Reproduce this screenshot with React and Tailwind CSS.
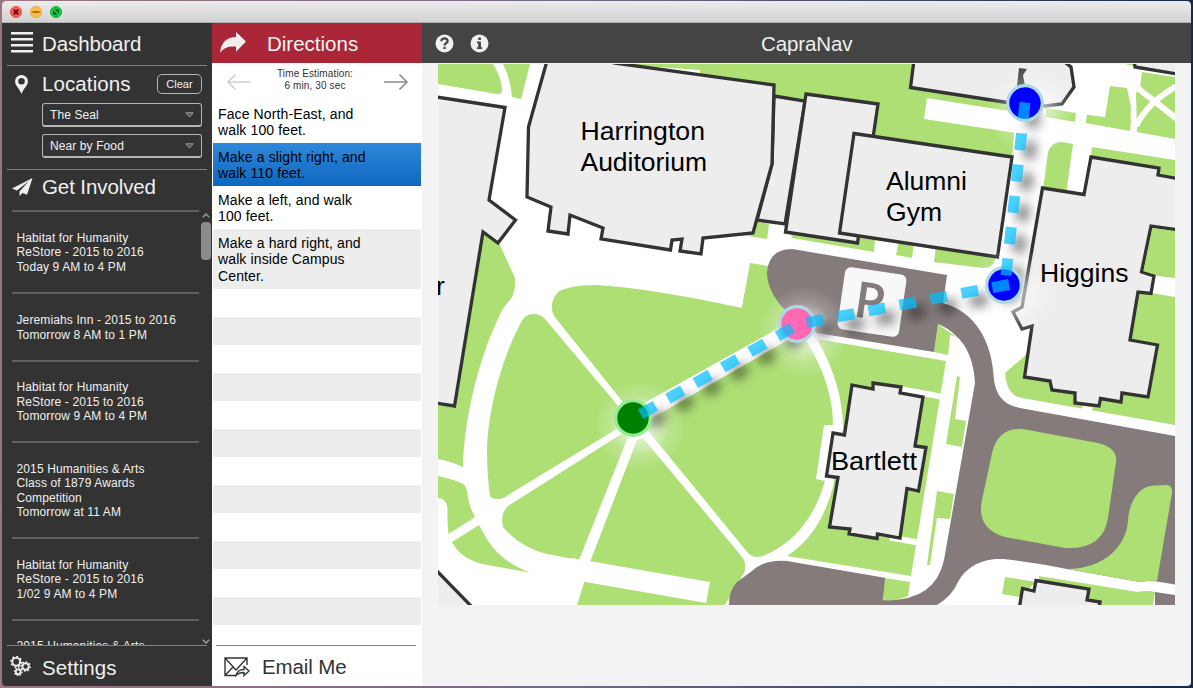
import React from "react";

const EVENTS = [
  { h: "h-[82px]", lines: ["Habitat for Humanity", "ReStore - 2015 to 2016", "Today 9 AM to 4 PM"] },
  { h: "h-[68px]", lines: ["Jeremiahs Inn - 2015 to 2016", "Tomorrow 8 AM to 1 PM"] },
  { h: "h-[81px]", lines: ["Habitat for Humanity", "ReStore - 2015 to 2016", "Tomorrow 9 AM to 4 PM"] },
  { h: "h-[96px]", lines: ["2015 Humanities & Arts", "Class of 1879 Awards", "Competition", "Tomorrow at 11 AM"] },
  { h: "h-[82px]", lines: ["Habitat for Humanity", "ReStore - 2015 to 2016", "1/02 9 AM to 4 PM"] },
  { h: "h-[52px]", lines: ["2015 Humanities & Arts"] },
];

const STEPS = [
  { cls: "h-[43px] bg-white", lines: ["Face North-East, and", "walk 100 feet."] },
  { cls: "h-[43px] bg-gradient-to-b from-[#2e87d9] to-[#0e68c0]", lines: ["Make a slight right, and", "walk 110 feet."] },
  { cls: "h-[43px] bg-white", lines: ["Make a left, and walk", "100 feet."] },
  { cls: "h-[60px] bg-[#ededed]", lines: ["Make a hard right, and", "walk inside Campus", "Center."] },
];

function TitleBar() {
  return (
    <div className="flex h-[22px] shrink-0 items-center gap-[8px] rounded-t-[4px] border-b border-[#b0b0b0] bg-gradient-to-b from-[#ececec] to-[#d2d2d2] pl-[8px]">
      <svg width="12" height="12" viewBox="0 0 12 12">
        <circle cx="6" cy="6" r="5.6" fill="#fc5753" stroke="#df4744" strokeWidth=".8" />
        <path d="M3.7 3.7l4.6 4.6M8.3 3.7L3.7 8.3" stroke="#6b0507" strokeWidth="1.9" />
      </svg>
      <svg width="12" height="12" viewBox="0 0 12 12">
        <circle cx="6" cy="6" r="5.6" fill="#fdbc40" stroke="#de9f34" strokeWidth=".8" />
        <path d="M2.4 6h7.2" stroke="#985712" strokeWidth="1.6" />
      </svg>
      <svg width="12" height="12" viewBox="0 0 12 12">
        <circle cx="6" cy="6" r="5.6" fill="#0fc94e" stroke="#12ac28" strokeWidth=".8" />
        <path d="M4.6 3.2h4.2v4.2zM3.2 4.6v4.2h4.2z" fill="#045d0e" />
      </svg>
    </div>
  );
}

function Select({ label }) {
  return (
    <div className="flex h-[24px] w-[160px] items-center justify-between rounded-[3px] border border-b-2 border-[#b5b5b5] pr-[7px] pl-[7px] text-[12px] leading-none text-[#f2f2f2]">
      <span className="tracking-[0.1px]">{label}</span>
      <svg width="9" height="6" viewBox="0 0 9 6">
        <path d="M.8.8h7.4L4.5 5z" fill="#555" stroke="#a5a5a5" strokeWidth=".9" />
      </svg>
    </div>
  );
}

function Gear({ cx, cy, r }) {
  return (
    <g fill="none" stroke="#f0f0f0">
      <circle cx={cx} cy={cy} r={r} strokeWidth="1.9" />
      <circle cx={cx} cy={cy} r={r + 1.4} strokeWidth="1.4" pathLength="16" strokeDasharray="1 1" />
    </g>
  );
}

function Sidebar() {
  return (
    <aside className="flex w-[210px] shrink-0 flex-col bg-[#333333] text-[#f0f0f0]">
      <div className="mx-[5px] flex h-[43px] shrink-0 items-center border-b border-[#828282] pl-[4px]">
        <svg width="22" height="21" viewBox="0 0 22 21" className="-mt-[4px]">
          <path d="M0 1.3h22M0 7.2h22M0 13.2h22M0 19.3h22" stroke="#f0f0f0" strokeWidth="2.4" />
        </svg>
        <span className="ml-[9px] text-[20.5px] leading-[42px] tracking-[-0.1px]">Dashboard</span>
      </div>
      <div className="mx-[5px] flex h-[104px] shrink-0 flex-col border-b border-[#828282]">
        <div className="flex h-[36px] items-center pr-[5px] pl-[8px]">
          <svg width="13" height="19" viewBox="0 0 13 19">
            <path fillRule="evenodd" d="M6.5 0A6.4 6.4 0 0 0 .1 6.4C.1 10.6 4.4 13 6.5 19 8.6 13 12.9 10.6 12.9 6.4A6.4 6.4 0 0 0 6.5 0zM6.5 3a3.3 3.3 0 1 1 0 6.6 3.3 3.3 0 0 1 0-6.600z" fill="#f0f0f0" />
          </svg>
          <span className="ml-[14px] text-[20.5px] leading-none tracking-[0.1px]">Locations</span>
          <span className="ml-auto flex h-[20px] w-[45px] items-center justify-center rounded-[5px] border border-[#b5b5b5] text-[11px]">Clear</span>
        </div>
        <div className="mt-[1px] ml-[35px] flex flex-col gap-[7px]">
          <Select label="The Seal" />
          <Select label="Near by Food" />
        </div>
      </div>
      <div className="flex h-[40px] shrink-0 items-center pl-[10px]">
        <svg width="21" height="18" viewBox="0 0 21 18" className="-mt-[6px]">
          <path d="M20.5 0L0 10.5 5 12.5 17 3 7.5 13.5V18l3-3 4.5 1.8z" fill="#f0f0f0" />
        </svg>
        <span className="-mt-[5px] ml-[9px] text-[20.5px] leading-none tracking-[-0.1px]">Get Involved</span>
      </div>
      <div className="flex min-h-0 flex-1">
        <div className="ml-[10px] w-[187px] overflow-hidden">
          {EVENTS.map((e, i) => (
            <div key={i} className={`flex flex-col justify-center border-t-2 border-[#5f5f5f] pt-[1px] pl-[4.5px] text-[12px] leading-[14.4px] tracking-[0.12px] whitespace-nowrap ${e.h}`}>
              {e.lines.map((l) => <div key={l}>{l}</div>)}
            </div>
          ))}
        </div>
        <div className="ml-[1px] flex flex-1 flex-col items-center">
          <svg width="8" height="5" viewBox="0 0 8 5" className="mt-[3px]"><path d="M.8 4.2L4 1l3.2 3.2" stroke="#999" strokeWidth="1.5" fill="none" /></svg>
          <div className="mt-[4px] h-[38px] w-[10px] rounded-[4px] bg-[#8b8b8b]" />
          <svg width="8" height="5" viewBox="0 0 8 5" className="mt-auto mb-[1px]"><path d="M.8.8L4 4 7.2.8" stroke="#999" strokeWidth="1.5" fill="none" /></svg>
        </div>
      </div>
      <div className="mx-[5px] flex h-[41px] shrink-0 items-center border-t border-[#828282] pl-[3px]">
        <svg width="21" height="20" viewBox="0 0 21 20">
          <Gear cx={6.2} cy={5.8} r={3.9} />
          <Gear cx={15.6} cy={10.5} r={3.2} />
          <Gear cx={8.2} cy={15.8} r={2.4} />
        </svg>
        <span className="mt-[5px] ml-[11px] text-[20.5px] leading-none tracking-[0.05px]">Settings</span>
      </div>
    </aside>
  );
}

function Directions() {
  return (
    <section className="flex w-[210px] shrink-0 flex-col bg-white">
      <div className="flex h-[40px] shrink-0 items-center bg-[#ab2738] pl-[8px] text-[#f3f3f3]">
        <svg width="26" height="21" viewBox="0 0 26 21" className="-mt-[1px]">
          <path d="M0 20.8C1 10.5 7 5.2 16 5V0l10 9.6-10 10.2V14.6C9 14 4 15.5 0 20.8z" fill="#f3eeee" />
        </svg>
        <span className="mt-[2px] ml-[21px] text-[20.5px] leading-none">Directions</span>
      </div>
      <div className="flex h-[37px] shrink-0 justify-between pr-[13px] pl-[14px]">
        <svg width="26" height="18" viewBox="0 0 26 18" className="mt-[10px]"><path d="M25 9H2M9.5 1.5L2 9l7.5 7.5" stroke="#cfcfcf" strokeWidth="1.6" fill="none" /></svg>
        <div className="mt-[5px] -ml-[5px] text-center text-[10px] leading-[12px] tracking-[0.12px] text-[#333]">
          <div>Time Estimation:</div>
          <div>6 min, 30 sec</div>
        </div>
        <svg width="26" height="18" viewBox="0 0 26 18" className="mt-[10px]"><path d="M1 9h23M16.5 1.5L24 9l-7.5 7.5" stroke="#8a8a8a" strokeWidth="1.6" fill="none" /></svg>
      </div>
      <div className="mx-[1px] flex min-h-0 flex-1 flex-col">
        {STEPS.map((s, i) => (
          <div key={i} className={`flex shrink-0 flex-col justify-center pt-[1px] pl-[5px] text-[14px] leading-[16.2px] tracking-[0.12px] text-black ${s.cls}`}>
            {s.lines.map((l) => <div key={l}>{l}</div>)}
          </div>
        ))}
        {Array.from({ length: 12 }, (_, i) => (
          <div key={i} className={i % 2 ? "h-[28px] shrink-0 bg-[#ededed]" : "h-[28px] shrink-0 bg-white"} />
        ))}
      </div>
      <div className="mr-[6px] ml-[4px] flex h-[41px] shrink-0 items-center border-t border-[#828282] pl-[8px] text-[#333]">
        <svg width="26" height="20" viewBox="0 0 26 20" fill="none" stroke="#333" strokeWidth="1.4" className="mt-[2px]">
          <path d="M12 18.500H1V1h22v7M1 1l11 12L23 1M1 18.500l8-8.500" />
          <path d="M12 18.500c1-4.500 4-6 8-6V9.500l5 4.500-5 4.500v-3c-3 0-5.500.5-8 3z" />
        </svg>
        <span className="mt-[3px] ml-[12px] text-[20.5px] leading-none tracking-[-0.1px]">Email Me</span>
      </div>
    </section>
  );
}

const ROUTE = [
  "M640.6 414.2L792.9 327.5",
  "M806.6 322.6L1009.5 284.4",
  "M1006 275.4L1025 102.5",
];

const STOPS = [
  { x: 633, y: 418, fill: "#008000", ring: "#90ee90" },
  { x: 797, y: 324, fill: "#ff69b4", ring: "#add8e6" },
  { x: 1004, y: 285, fill: "#0000ff", ring: "#add8e6" },
  { x: 1025, y: 103, fill: "#0000ff", ring: "#add8e6" },
];

const LABELS = [
  { x: 580.5, y: 140, w: 124.5, text: "Harrington" },
  { x: 580.5, y: 171, w: 126.5, text: "Auditorium" },
  { x: 886, y: 190, w: 81, text: "Alumni" },
  { x: 886, y: 221, w: 56, text: "Gym" },
  { x: 1040, y: 282, w: 88.5, text: "Higgins" },
  { x: 831, y: 469.5, w: 86, text: "Bartlett" },
];

function CampusMap() {
  return (
    <svg width="737" height="541" viewBox="438 64 737 541" className="block">
      <defs>
        <radialGradient id="glow">
          <stop offset="0" stopColor="#fff" stopOpacity=".75" />
          <stop offset=".35" stopColor="#fff" stopOpacity=".55" />
          <stop offset=".65" stopColor="#fff" stopOpacity=".2" />
          <stop offset="1" stopColor="#fff" stopOpacity="0" />
        </radialGradient>
        <filter id="shadow" filterUnits="userSpaceOnUse" x="438" y="64" width="737" height="541">
          <feGaussianBlur stdDeviation="5.5" />
        </filter>
      </defs>
      <rect x="438" y="64" width="737" height="541" fill="#fff" />

      {/* lawns */}
      <g fill="#addf75">
        <path d="M438 64H493Q501 76 502 89Q502 95 497 94L438 84Z" />
        <path d="M503 64Q511 80 512 97L521 99L530 64Z" />
        <path d="M480 228L499 243L515 278Q516 290 511 299Q502 308 497 321C480 358 464 415 463 467Q450 461 438 459V400Z" />
        <path d="M438 476Q453 479 463 484Q466 486 467 491Q468 505 475 517L448.500 534Q447 522 447.500 508Q446 498 438 498Z" />
        <path d="M452 542L479 525L488 541Q502 562 530 572.500L487 565Q461 560 452 542Z" />
        <path d="M534 314Q527 314 523 319C505 350 488 405 487 450Q487 475 490 496Q491 499 499 499Q505 498 508 495L620 427L630 420L545 319Q540 314 534 314Z" />
        <path d="M595 285Q570 285 558 292Q548 304 554 316L630 411L795 319L775 267L750 263L742 308Q650 288 595 285Z" />
        <path d="M640 425L800 333L807 342Q833 385 833 425L824 425L816 479L825 481C815 515 797 542 763 556Q754 559 748 553L645 427Z" />
        <path d="M643 438L743 558Q747 565 744 573L725 605H577L584 583L590 562L637 440Z" />
        <path d="M628 437L579 560L547 554Q520 547 503 527Q500 514 508 506L623 433Z" />
        <path d="M817 339L946 361L911 576L787 556Q820 535 833 487L843 428Q843 385 817 339Z" />
        <path d="M938 324L956 337L950 335L948 355L934 352Z" />
        <path d="M957 376L960 377L955 419L966 421L962 447L946 444Z" />
        <path d="M937 491L954 494L950 519L937 518L930 565H927Z" />
        <path d="M615 64H1000L1020 110L1014 134L1012 160L700 240V70Z" />
        <path d="M1087 115L1105 118L1110 86L1127 88L1131 107L1130 131L1086 123Z" />
        <path d="M1142 72L1175 77V139L1137 132L1136 93L1140 88Z" />
        <path d="M1125 64H1134V66Z" />
        <path d="M1092 147L1175 160V185L1090 165Z" />
        <path d="M1043 190L1048 152Q1052 141 1062 142L1073 144L1066 195Z" />
        <path d="M1145 225H1175V278L1150 275L1138 272Z" />
        <path d="M1120 290L1152 293L1175 297V425L1022 398Q1007 396 1005 373L1035 347Z" />
      </g>
      <path d="M746 200L795 200L860 215H1010L1000 290H746Z" fill="#fff" />
      <g fill="#addf75">
        <path d="M750 263L742 308L790 320L775 267Z" />
        <path d="M750 220L769 224L767 239L748 236Z" />
        <path d="M790 230L875 240L874 252L792 238Z" />
        <path d="M899 240L914 243L912 258L896 255Z" />
        <path d="M936 245L996 255Q994 269 983 268L934 262Z" />
      </g>

      {/* footpaths */}
      <path d="M927 98L1046 117L1135 131L1130 150L924 119Z" fill="#fff" />
      <path d="M1046 108L1076 113L1075 122L1046 117ZM1087 115L1131 120L1130 131L1086 123Z" fill="#addf75" />
      <g fill="none" stroke="#fff">
        <path d="M570 568.500L708 592.500" strokeWidth="21.500" />
        <path d="M1135 86L1177 119M1136 126Q1148 102 1177 86" strokeWidth="6" />
        <path d="M895 388L943 397M890 537.500L918 542.500" strokeWidth="6" />
        <path d="M633 418L798 325" strokeWidth="11" />
        <path d="M1082 408L1092 410" strokeWidth="5" />
      </g>

      {/* roads */}
      <path d="M792 249L947 275L943 303C975 312 992 340 994 380Q997 404 1020 408L1175 436V605H729Q729 590 737 582L752 571Q765 559 787 561L886 578L883 600Q935 602 944 560L975 383Q973 350 955 335Q948 328 938 324L934 352L817 333L783 308Q767 290 767 272Q769 249 792 249Z" fill="#857b7b" />
      <path d="M937 605Q952 596 958 582C967 565 985 558 1003 559Q1030 562 1067 569L1140 582Q1150 580 1160 582L1175 584.500V595L1155 592V605Z" fill="#fff" />
      <g fill="#addf75">
        <path d="M885 578L910 582L908 596Q893 602 883 600Z" />
        <path d="M1023 429L1098 443Q1118 448 1116 462L1108 518Q1103 550 1065 548L1005 537Q976 529 982 500L992 453Q998 427 1023 429Z" />
        <path d="M1067 569C1105 569 1127 545 1128 520C1130 497 1142 485 1155 485.500L1168 485Q1173 487 1172 493L1157 581Q1148 580 1140 582Z" />
        <path d="M1039 576L1138 592Q1147 590 1155 592L1153 605H1039Z" />
        <path d="M1005 577L1036 582L1020 597L1002 594Z" />
      </g>

      {/* buildings */}
      <g fill="#ededed" stroke="#333" strokeWidth="3.3">
        <path d="M430 96L505 107.500L489 200L515.500 220L498 243L483 232L454.500 406L430 402Z" />
        <path d="M774 96L805 101L785 224L757 220L772 164Z" />
        <path d="M550 50L528.500 127L527 197L551 207L548 231L568 234L570 215L603 228L601 239L670.500 250L672 240L682 239L680 251L701 254L703 238L753 233L772 164L774 85L615 63Z" />
        <path d="M806 94L878 104L857.500 243L785.500 232Z" />
        <path d="M854 133.500L1012 157L997.500 257L839.500 233Z" />
        <path d="M914 60L910.500 87.500L1017 104L1045 106L1062 104L1074 87L1071 67L1062 60Z" />
        <path d="M1134 60L1135 67L1180 74.500V60Z" />
        <path d="M1042.500 188L1084 194.500L1091 157L1159 168L1158 175L1180 179V230L1151 226L1141.500 272L1154 276L1151 293.500L1138 292L1130 340L1157.500 345L1148 397L1122 393L1121 402L1100.500 398.500L1099 406L1075 403V393L1052 390L1050 381L1024.500 377L1032 326L1022 329L1013 312L1022 307Z" />
        <path d="M852 385L873 389V383L901 387L900 393L923 397L915 446L926 447.500L918.500 491L907 488.500L900 538L877.500 534L877 538.500L849 534L850 529L829.500 527L838 477.500L826.500 476L833 433L844.500 435Z" />
        <path d="M1019 610L1022.500 588.500L1034 591L1036 580.500L1089 589L1087 600L1100 602L1099 610Z" />
        <path d="M430 564L476 611H430Z" />
      </g>
      {/* green notch east of Higgins */}
      <path d="M1152.500 228L1176 231.500V278L1156 275L1143.500 271Z" fill="#addf75" />
      <path d="M1019 68L1027 69L1023 75L1025 86H1017Z" fill="#444" />

      {/* parking sign */}
      <g transform="translate(872 302) rotate(8.2)">
        <rect x="-31" y="-31.5" width="62" height="63" rx="6" fill="#f8f8f8" />
        <text x="-17.5" y="17" fontSize="50" fontWeight="600" fontFamily="Open Sans, sans-serif" fill="#857b7b">P</text>
      </g>

      {STOPS.map((s, i) => <circle key={i} cx={s.x + 7} cy={s.y + 8} r="46" fill="url(#glow)" />)}
      <g filter="url(#shadow)" fill="none" stroke="#000" strokeOpacity=".5" strokeWidth="12" strokeDasharray="17 14.5" transform="translate(9 8.5)">
        {ROUTE.map((d) => <path key={d} d={d} />)}
      </g>
      {STOPS.map((s, i) => <circle key={i} cx={s.x} cy={s.y} r="17.3" fill={s.fill} stroke={s.ring} strokeWidth="3.2" />)}
      <g fill="none" stroke="#00bfff" strokeOpacity=".7" strokeWidth="11" strokeDasharray="17 14.5">
        {ROUTE.map((d) => <path key={d} d={d} />)}
      </g>

      <g fontFamily="Liberation Sans, Arial, sans-serif" fontSize="26.5" fill="#000">
        {LABELS.map((l) => (
          <text key={l.text} x={l.x} y={l.y} textLength={l.w} lengthAdjust="spacingAndGlyphs">{l.text}</text>
        ))}
        <text x="436" y="295">r</text>
      </g>
    </svg>
  );
}

export default function App() {
  return (
    <div className="h-[688px] w-[1193px] overflow-hidden bg-gradient-to-r from-[#9a7680] via-[#706984] to-[#17274f] pt-[1px] pr-[2px] pb-[2px] pl-[2px] font-['Liberation_Sans',Arial,sans-serif]">
      <div className="flex h-[685px] flex-col overflow-hidden rounded-[4px]">
        <TitleBar />
        <div className="flex min-h-0 flex-1">
          <Sidebar />
          <Directions />
          <main className="flex min-w-0 flex-1 flex-col bg-[#f3f3f3]">
            <header className="flex h-[40px] shrink-0 items-center bg-[#444444] pl-[13px] text-[#f0f0f0]">
              <svg width="19" height="19" viewBox="0 0 19 19">
                <circle cx="9.5" cy="9.5" r="9" fill="#f0f0f0" />
                <path d="M6.3 7.2C6.3 3.3 12.8 3.5 12.6 7.1C12.5 9.2 9.6 9.2 9.6 11.5M9.6 12.8V15" fill="none" stroke="#444" strokeWidth="2.3" />
              </svg>
              <svg width="19" height="19" viewBox="0 0 19 19" className="ml-[16px]">
                <circle cx="9.5" cy="9.5" r="9" fill="#f0f0f0" />
                <path d="M8.2 3.5h2.7v2.6H8.2zM7 7.5h3.9v5.8H12V15H7v-1.7h1.2V9.2H7z" fill="#444" />
              </svg>
              <span className="mt-[2px] ml-[272px] text-[20.5px] leading-none tracking-[-0.1px]">CapraNav</span>
            </header>
            <div className="pt-[1px] pl-[16px]">
              <CampusMap />
            </div>
          </main>
        </div>
      </div>
    </div>
  );
}
